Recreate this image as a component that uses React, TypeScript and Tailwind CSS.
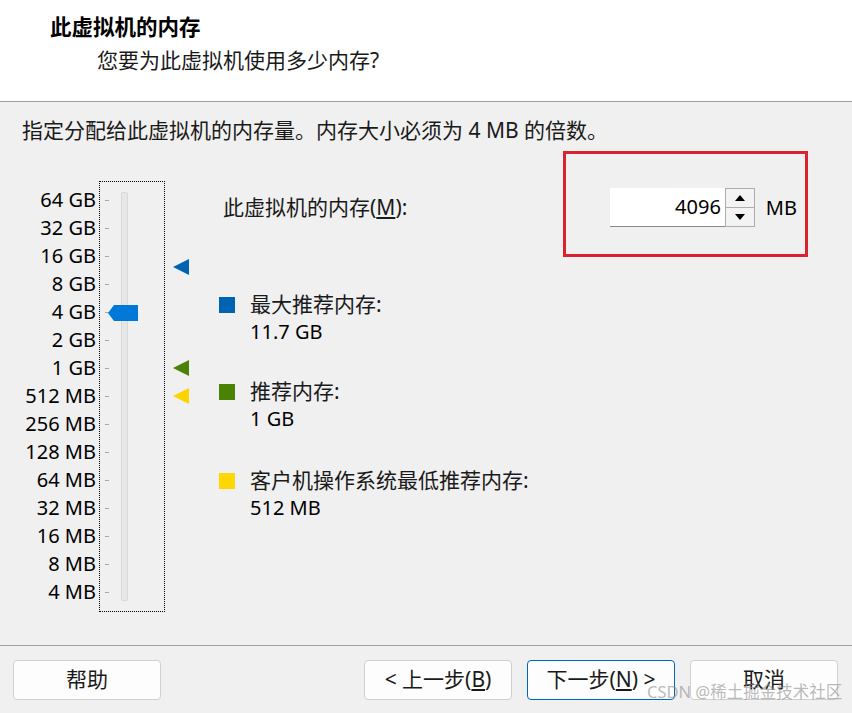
const font = { fontFamily: '"Noto Sans", "Noto Sans CJK SC", sans-serif' }

const sizes = [
  '64 GB', '32 GB', '16 GB', '8 GB', '4 GB', '2 GB', '1 GB', '512 MB',
  '256 MB', '128 MB', '64 MB', '32 MB', '16 MB', '8 MB', '4 MB',
]

function Marker({ color, top }: { color: string; top: string }) {
  return (
    <svg className={`absolute left-[8px] ${top}`} width="16" height="16" viewBox="0 0 16 16">
      <polygon points="0,8 16,0 16,16" fill={color} />
    </svg>
  )
}

function Legend({ color, label, value, className }: { color: string; label: string; value: string; className?: string }) {
  return (
    <div className={`flex gap-[15px] ${className ?? ''}`}>
      <div className={`mt-[7px] h-4 w-4 shrink-0 ${color}`} />
      <div className="flex flex-col leading-[28px]">
        <span className="text-[21px] text-[#1a1a1a]">{label}</span>
        <span>{value}</span>
      </div>
    </div>
  )
}

function Slider() {
  return (
    <div className="relative h-[431px] w-[66px] border border-dotted border-black">
      {/* ticks */}
      <div className="absolute left-[5px] top-[18px] flex flex-col gap-[27px]">
        {sizes.map((s) => (
          <div key={s} className="h-px w-[4px] bg-[#a8a8a8]" />
        ))}
      </div>
      {/* track */}
      <div className="absolute left-[21px] top-[10px] h-[409px] w-[7px] rounded-[2px] border border-[#d9d9d9] bg-[#e7e7e7]" />
      {/* thumb */}
      <svg className="absolute left-[8px] top-[123px]" width="30" height="16" viewBox="0 0 30 16">
        <polygon points="0,8 6,0 30,0 30,16 6,16" fill="#0078d7" />
      </svg>
    </div>
  )
}

function Button({ children, primary }: { children: React.ReactNode; primary?: boolean }) {
  return (
    <button
      className={`h-[40px] w-[148px] rounded-[4px] border text-[21px] text-[#1a1a1a] ${
        primary ? 'border-[#0067c0] bg-[#fdfdfd]' : 'border-[#d0d0d0] bg-[#fdfdfd]'
      }`}
    >
      {children}
    </button>
  )
}

export default function App() {
  return (
    <div className="relative h-[713px] w-[852px] overflow-hidden bg-[#f0f0f0] text-[20px] text-black" style={font}>
      {/* Header */}
      <div className="h-[102px] border-b border-[#a0a0a0] bg-white pt-[13px] leading-[28px]">
        <div className="pl-[50px] text-[21.5px] font-bold">此虚拟机的内存</div>
        <div className="mt-[5px] pl-[97px] text-[21px] text-[#1a1a1a]">您要为此虚拟机使用多少内存?</div>
      </div>

      {/* Body */}
      <div className="h-[543px] pt-[14px]">
        <div className="pl-[22px] text-[21px] leading-[28px] text-[#1a1a1a]">
          指定分配给此虚拟机的内存量。内存大小必须为 4 MB 的倍数。
        </div>

        <div className="mt-[37px] flex">
          <div className="flex w-[96px] flex-col items-end pt-[5px] leading-[28px]">
            {sizes.map((s) => (
              <span key={s}>{s}</span>
            ))}
          </div>
          <div className="ml-[3px]">
            <Slider />
          </div>
          <div className="relative w-[54px]">
            <Marker color="#0063b1" top="top-[78px]" />
            <Marker color="#498205" top="top-[179px]" />
            <Marker color="#fcd400" top="top-[207px]" />
          </div>

          <div className="flex w-[578px] flex-col pt-[7px]">
            <div className="flex h-[39px] items-center justify-between">
              <span className="pl-[4px] text-[21px] text-[#1a1a1a]">
                此虚拟机的内存(<span className="underline">M</span>):
              </span>
              <div className="flex items-center">
                <div className="flex h-[39px] w-[115px] items-center justify-end border-b border-[#8a8a8a] bg-white pr-[4px]">
                  4096
                </div>
                <div className="flex h-[39px] w-[30px] flex-col">
                  <div className="flex h-[20px] items-center justify-center border border-[#adadad] bg-[#f3f3f3]">
                    <svg width="10" height="6" viewBox="0 0 10 6"><polygon points="5,0 10,6 0,6" fill="#000" /></svg>
                  </div>
                  <div className="flex h-[19px] items-center justify-center border border-t-0 border-[#adadad] bg-[#f3f3f3]">
                    <svg width="10" height="6" viewBox="0 0 10 6"><polygon points="0,0 10,0 5,6" fill="#000" /></svg>
                  </div>
                </div>
                <span className="ml-[11px]">MB</span>
              </div>
            </div>

            <Legend className="mt-[63px]" color="bg-[#0063b1]" label="最大推荐内存:" value="11.7 GB" />
            <Legend className="mt-[31px]" color="bg-[#498205]" label="推荐内存:" value="1 GB" />
            <Legend className="mt-[33px]" color="bg-[#ffd700]" label="客户机操作系统最低推荐内存:" value="512 MB" />
          </div>
        </div>
      </div>

      {/* Footer */}
      <div className="flex border-t border-[#a0a0a0] pl-[13px] pr-[14px] pt-[14px]">
        <Button>帮助</Button>
        <div className="ml-auto flex gap-[15px]">
          <Button>
            &lt; 上一步(<span className="underline">B</span>)
          </Button>
          <Button primary>
            下一步(<span className="underline">N</span>) &gt;
          </Button>
          <Button>取消</Button>
        </div>
      </div>

      {/* annotation box */}
      <div className="pointer-events-none absolute left-[563px] top-[151px] h-[106px] w-[245px] border-[3px] border-[#d9232e]" />

      {/* watermark */}
      <span className="pointer-events-none absolute left-[647px] top-[681px] whitespace-nowrap text-[16.5px] leading-[22px] text-[#8c8c8c]/60">
        CSDN @稀土掘金技术社区
      </span>
    </div>
  )
}
